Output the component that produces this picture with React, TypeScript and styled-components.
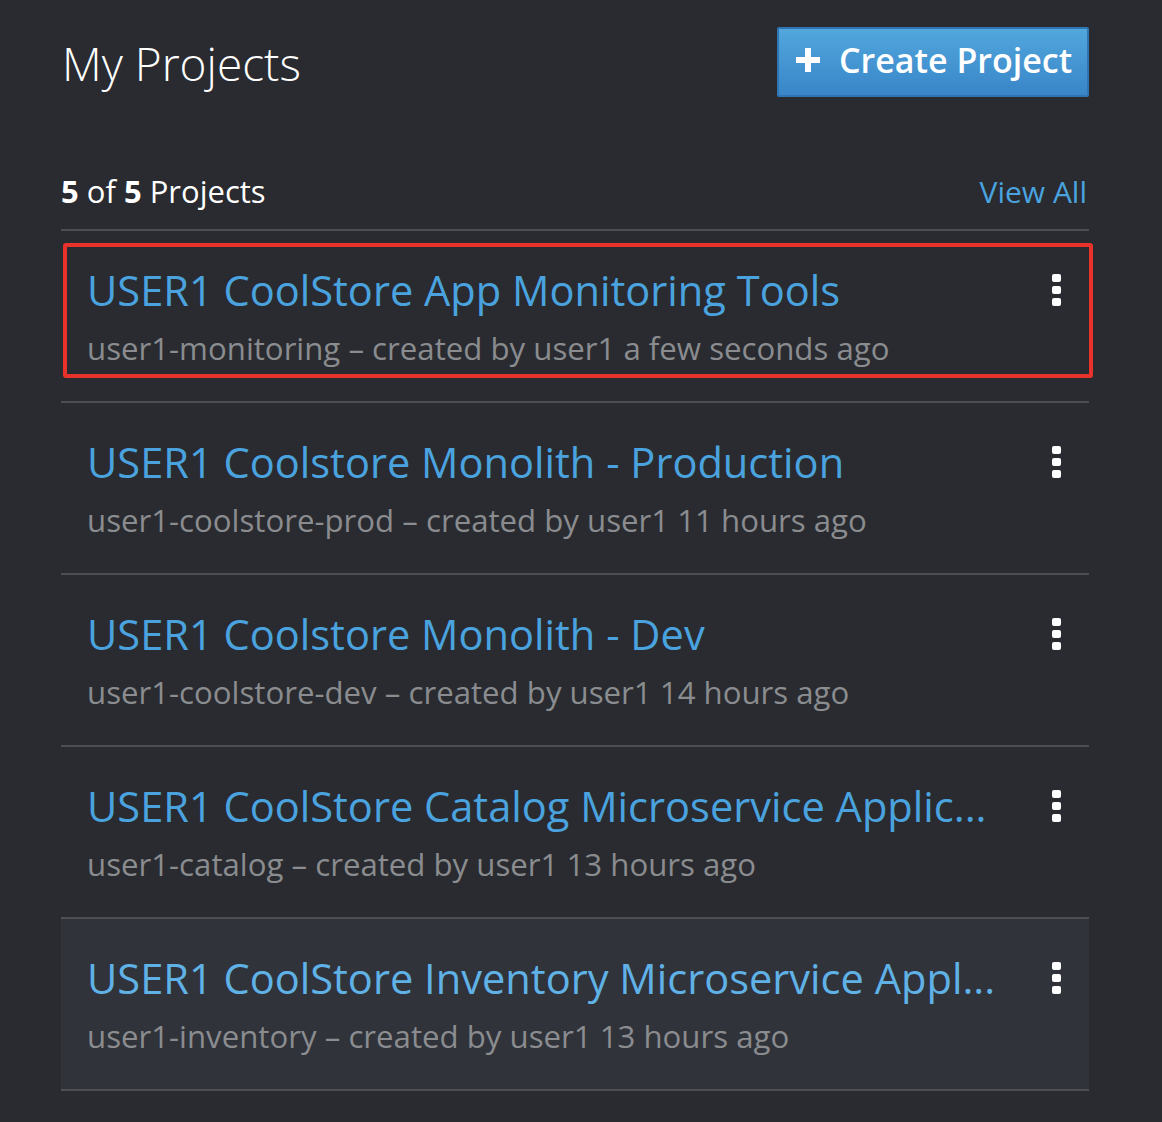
import React from 'react';
import styled, { createGlobalStyle } from 'styled-components';

const GlobalStyle = createGlobalStyle`
  html, body {
    margin: 0;
    padding: 0;
    background: #292b30;
  }
  body {
    font-family: 'Open Sans', 'Noto Sans', 'Liberation Sans', sans-serif;
  }
`;

const projects = [
  {
    title: 'USER1 CoolStore App Monitoring Tools',
    name: 'user1-monitoring',
    age: 'a few seconds ago',
    highlighted: true,
  },
  {
    title: 'USER1 Coolstore Monolith - Production',
    name: 'user1-coolstore-prod',
    age: '11 hours ago',
  },
  {
    title: 'USER1 Coolstore Monolith - Dev',
    name: 'user1-coolstore-dev',
    age: '14 hours ago',
  },
  {
    title: 'USER1 CoolStore Catalog Microservice Applic...',
    name: 'user1-catalog',
    age: '13 hours ago',
  },
  {
    title: 'USER1 CoolStore Inventory Microservice Appl...',
    name: 'user1-inventory',
    age: '13 hours ago',
    hovered: true,
  },
];

export default function App() {
  return (
    <Page>
      <GlobalStyle />
      <Header>
        <Heading>My Projects</Heading>
        <CreateButton>
          <PlusIcon />
          Create Project
        </CreateButton>
      </Header>
      <Toolbar>
        <Count>
          <b>5</b> of <b>5</b> Projects
        </Count>
        <ViewAll href="#">View All</ViewAll>
      </Toolbar>
      <List>
        {projects.map((p, i) => (
          <Row key={i} hovered={p.hovered}>
            <RowBody>
              <Title hovered={p.hovered}>{p.title}</Title>
              <Meta>
                {p.name} – created by user1 {p.age}
              </Meta>
            </RowBody>
            <Kebab>
              <i />
              <i />
              <i />
            </Kebab>
            {p.highlighted && <Highlight />}
          </Row>
        ))}
      </List>
    </Page>
  );
}

const PlusIcon = () => (
  <svg width="28" height="28" viewBox="0 0 28 28">
    <path d="M11 2h6v9h9v6h-9v9h-6v-9H2v-6h9z" fill="#fff" />
  </svg>
);

const Page = styled.div`
  width: 1028px;
  padding: 0 0 30px 61px;
`;

const Header = styled.div`
  display: flex;
  justify-content: space-between;
  align-items: flex-start;
  padding-top: 27px;
`;

const Heading = styled.h1`
  margin: 5px 0 0 1px;
  font-size: 46px;
  font-weight: 300;
  line-height: 62px;
  color: #fff;
`;

const CreateButton = styled.button`
  display: flex;
  align-items: center;
  gap: 17px;
  height: 70px;
  width: 312px;
  box-sizing: border-box;
  padding: 0 0 4px 15px;
  border: 2px solid #2f74b3;
  border-radius: 2px;
  background: linear-gradient(#51a6dc, #3985c8);
  color: #fff;
  font-family: inherit;
  font-size: 34px;
  font-weight: 600;
  cursor: pointer;
`;

const Toolbar = styled.div`
  display: flex;
  justify-content: space-between;
  align-items: baseline;
  margin-top: 73px;
  padding-bottom: 17px;
  border-bottom: 2px solid #4b4e54;
`;

const Count = styled.div`
  font-size: 31px;
  color: #fff;
  b {
    font-weight: 700;
  }
`;

const ViewAll = styled.a`
  font-size: 30px;
  color: #4aa3df;
  text-decoration: none;
  margin-right: 2px;
`;

const List = styled.div`
  display: flex;
  flex-direction: column;
`;

const Row = styled.div<{ hovered?: boolean }>`
  position: relative;
  display: flex;
  align-items: flex-start;
  height: 170px;
  padding: 0 28px 0 26px;
  border-bottom: 2px solid #4b4e54;
  background: ${(p) => (p.hovered ? '#30333a' : 'transparent')};
`;

const RowBody = styled.div`
  flex: 1;
  min-width: 0;
  padding-top: 31px;
`;

const Title = styled.a<{ hovered?: boolean }>`
  display: block;
  font-size: 41.6px;
  line-height: 56px;
  color: ${(p) => (p.hovered ? '#5fb1e6' : '#4aa3df')};
  white-space: nowrap;
`;

const Meta = styled.div`
  margin-top: 4px;
  font-size: 31.2px;
  line-height: 52px;
  color: #8a8c8f;
  white-space: nowrap;
`;

const Kebab = styled.div`
  display: flex;
  flex-direction: column;
  gap: 4px;
  margin-top: 43px;
  i {
    display: block;
    width: 9px;
    height: 8px;
    border-radius: 2px;
    background: #fff;
  }
`;

const Highlight = styled.div`
  position: absolute;
  left: 2px;
  right: -4px;
  top: 12px;
  bottom: 23px;
  border: 4px solid #e8322b;
  border-radius: 3px;
`;
